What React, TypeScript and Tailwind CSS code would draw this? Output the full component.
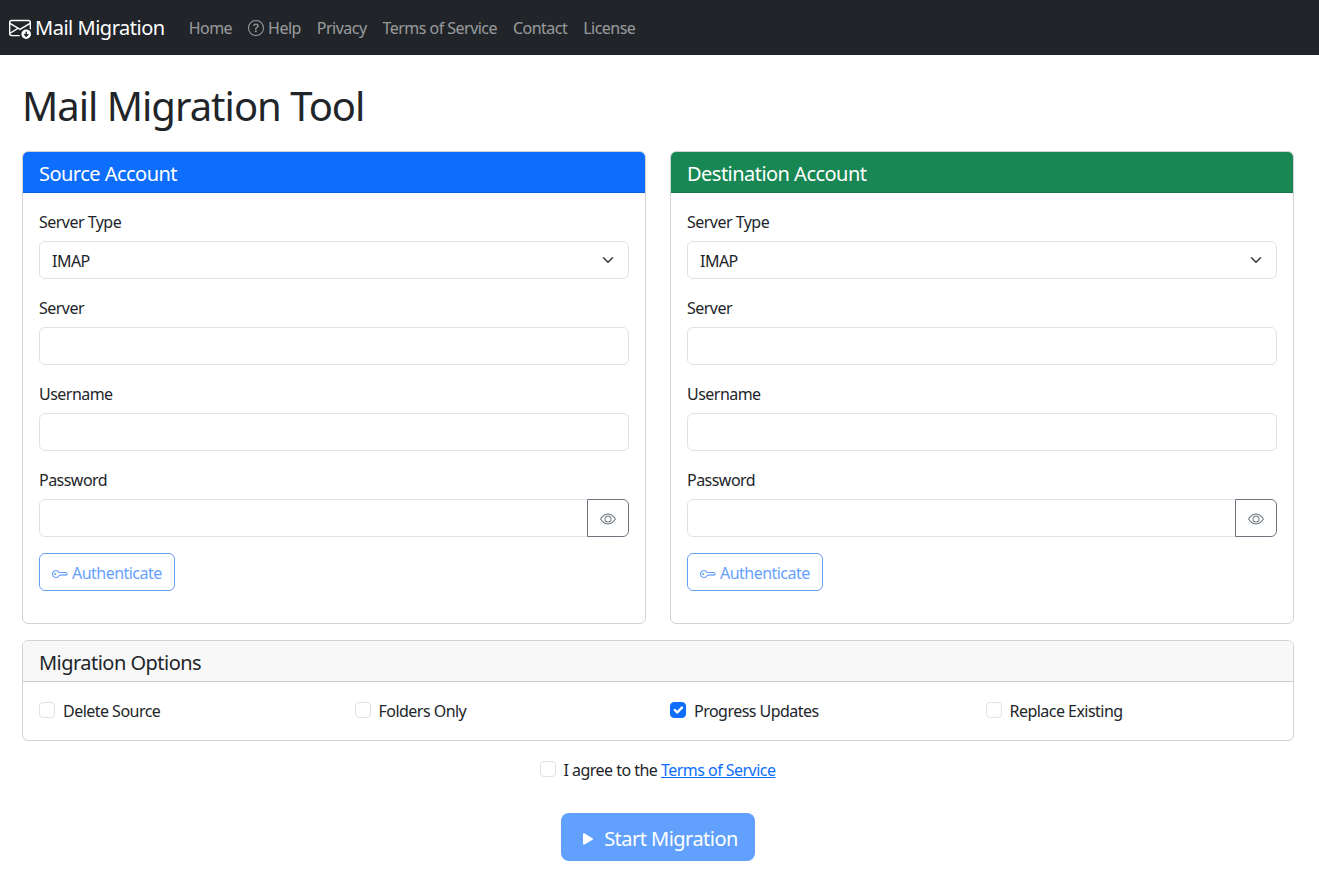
import { BsEnvelopeArrowDown, BsEye, BsKey, BsPlayFill, BsQuestionCircle } from "react-icons/bs";

const font = "font-['Noto_Sans','Open_Sans',sans-serif]";

const CheckItem = ({ label, checked }: { label: string; checked?: boolean }) => (
  <div className="flex w-1/4 px-3 mb-0.5 h-6 items-center">
    <input type="checkbox" readOnly checked={!!checked} className={`appearance-none shrink-0 w-4 h-4 rounded border ${checked ? "border-[#0d6efd] bg-[#0d6efd]" : "border-[#dee2e6]"}`} />
    {checked && (
      <svg className="absolute w-4 h-4 text-white" viewBox="0 0 20 20" fill="none">
        <path stroke="currentColor" strokeLinecap="round" strokeLinejoin="round" strokeWidth="3" d="m6 10 3 3 6-6" />
      </svg>
    )}
    <label className="ml-2 pt-0.5">{label}</label>
  </div>
);

const Field = ({ label }: { label: string }) => (
  <div className="mb-4">
    <label className="block mb-2 h-6 leading-[26px]">{label}</label>
    <input type="text" className="block w-full h-[38px] px-3 border border-[#dee2e6] rounded-md bg-white outline-none" />
  </div>
);

const AccountCard = ({ title, headerColor }: { title: string; headerColor: string }) => (
  <div className="w-1/2 px-3">
    <div className="border border-black/[.175] rounded-md overflow-hidden">
      <div className={`h-10 box-content px-4 text-xl text-white leading-[44px] border-b border-black/[.125] ${headerColor}`}>{title}</div>
      <div className="p-4">
        <div className="mb-4">
          <label className="block mb-2 h-6 leading-[26px]">Server Type</label>
          <div className="relative">
            <select className="block w-full h-[38px] pl-3 pr-9 pt-0.5 border border-[#dee2e6] rounded-md bg-white appearance-none outline-none">
              <option>IMAP</option>
            </select>
            <svg className="absolute right-[15px] top-[13px] w-3 h-3 pointer-events-none" viewBox="0 0 16 16" fill="none">
              <path stroke="#343a40" strokeLinecap="round" strokeLinejoin="round" strokeWidth="2" d="m2 5 6 6 6-6" />
            </svg>
          </div>
        </div>
        <Field label="Server" />
        <Field label="Username" />
        <div className="mb-4">
          <label className="block mb-2 h-6 leading-[26px]">Password</label>
          <div className="flex">
            <input type="password" className="flex-1 min-w-0 h-[38px] px-3 border border-[#dee2e6] rounded-l-md bg-white outline-none" />
            <button className="w-[42px] h-[38px] -ml-px flex items-center justify-center border border-[#6c757d] rounded-r-md text-[#6c757d]">
              <BsEye className="w-4 h-4 mt-0.5" />
            </button>
          </div>
        </div>
        <button className="mb-4 h-[38px] px-3 flex items-center gap-1 border border-[#0d6efd] rounded-md text-[#0d6efd] opacity-65">
          <BsKey className="w-4 h-4 mt-[3px]" />
          <span className="pt-0.5">Authenticate</span>
        </button>
      </div>
    </div>
  </div>
);

export default function App() {
  return (
    <div className={`min-h-[870px] bg-white text-[#212529] text-base tracking-[-0.033em] ${font}`}>
      <nav className="h-[55px] bg-[#212529] flex items-center pl-[9px]">
        <a className="flex items-center gap-1 text-xl text-white mr-4 tracking-[-0.024em]">
          <BsEnvelopeArrowDown className="w-[22px] h-[22px] mt-px" />
          Mail Migration
        </a>
        <div className="flex text-[#ffffff8c]">
          <a className="px-2">Home</a>
          <a className="px-2 flex items-center gap-1"><BsQuestionCircle className="w-4 h-4 mt-px" />Help</a>
          <a className="px-2">Privacy</a>
          <a className="px-2">Terms of Service</a>
          <a className="px-2">Contact</a>
          <a className="px-2">License</a>
        </div>
      </nav>
      <div className="pl-[22px] pr-[25px] pt-6">
        <h1 className="text-[40px] leading-[48px] font-normal mb-[21px] mt-[3px] tracking-[-0.025em]">Mail Migration Tool</h1>
        <div className="flex -mx-3">
          <AccountCard title="Source Account" headerColor="bg-[#0d6efd]" />
          <AccountCard title="Destination Account" headerColor="bg-[#198754]" />
        </div>
        <div className="mt-4 border border-black/[.175] rounded-md overflow-hidden">
          <div className="h-10 px-4 text-xl leading-[44px] bg-[#f8f8f8] border-b border-black/[.175] box-content">Migration Options</div>
          <div className="p-4">
            <div className="flex -mx-3">
              <CheckItem label="Delete Source" />
              <CheckItem label="Folders Only" />
              <CheckItem label="Progress Updates" checked />
              <CheckItem label="Replace Existing" />
            </div>
          </div>
        </div>
        <div className="mt-[17px] flex justify-center items-center h-6">
          <input type="checkbox" className="appearance-none w-4 h-4 mb-0.5 rounded border border-[#dee2e6]" />
          <label className="ml-[8px] pr-px">I agree to the <a className="text-[#0d6efd] underline">Terms of Service</a></label>
        </div>
        <div className="mt-[31px] flex justify-center">
          <button className="h-12 pl-[17px] pr-[17px] flex items-center gap-1.5 rounded-lg bg-[#0d6efd] text-white text-xl opacity-65">
            <BsPlayFill className="w-5 h-5 mt-[3px]" />
            <span className="pt-1">Start Migration</span>
          </button>
        </div>
      </div>
    </div>
  );
}
